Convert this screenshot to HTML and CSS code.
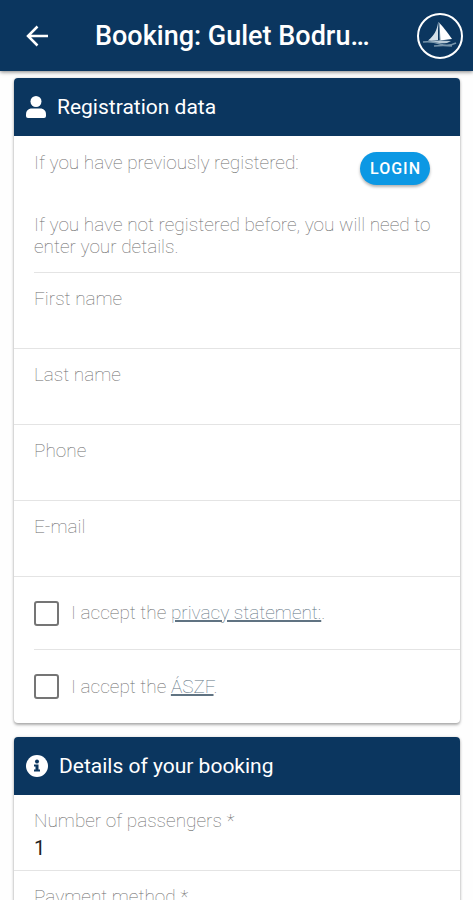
FILE: index.html
```html
<!DOCTYPE html>
<html lang="en">
<head>
<meta charset="utf-8">
<meta name="viewport" content="width=device-width, initial-scale=1">
<title>Booking: Gulet Bodrum</title>
<link rel="stylesheet" href="styles.css">
</head>
<body>
<div class="app">
  <header class="topbar">
    <button class="back" type="button" aria-label="Back">
      <svg viewBox="0 0 24 24" width="24" height="24" fill="none" stroke="#fff" stroke-width="2.500"><path d="M23 12H3.500M12.500 2.500L3 12l9.500 9.500"/></svg>
    </button>
    <h1 class="title">Booking: Gulet Bodru…</h1>
    <svg class="logo" viewBox="0 0 48 48" width="48" height="48" aria-hidden="true">
      <circle cx="24" cy="24" r="22" fill="none" stroke="#fff" stroke-width="2"/>
      <path d="M22 11C21 18 18 24 12 28.500Q17 29 22 28z" fill="#d3dfe8"/>
      <path d="M22.500 10C28 16 32 21 36 27L24 28.500z" fill="#fff"/>
      <path d="M23 11L24 29" stroke="#557995" stroke-width="1"/>
      <path d="M12 29Q24 28 35 29L31 31Q21 32 12 29z" fill="#b7c9d6"/>
      <path d="M7 30Q16 29 24 32T40 31M18 34Q27 33 36 34" fill="none" stroke="#7895ab" stroke-width="1.500"/>
    </svg>
  </header>
  <main class="content">
    <form class="cards">
      <section class="card">
        <h2 class="card-head">
          <svg viewBox="0 0 20 22" width="20" height="22" fill="#fff" aria-hidden="true"><circle cx="10" cy="5.500" r="5.500"/><path d="M6 12.500h8c4 0 6 2.500 6 6V20a2 2 0 0 1-2 2H2a2 2 0 0 1-2-2v-1.500c0-3.500 2-6 6-6z"/></svg>
          Registration data
        </h2>
        <div class="intro">
          <div class="login-row">
            <p>If you have previously registered:</p>
            <button class="login" type="button">LOGIN</button>
          </div>
          <p>If you have not registered before, you will need to enter your details.</p>
        </div>
        <div class="field"><label for="first">First name</label><input id="first" type="text"></div>
        <div class="field"><label for="last">Last name</label><input id="last" type="text"></div>
        <div class="field"><label for="phone">Phone</label><input id="phone" type="tel"></div>
        <div class="field"><label for="email">E-mail</label><input id="email" type="email"></div>
        <div class="check"><input id="privacy" type="checkbox"><label for="privacy">I accept the <a href="#privacy">privacy statement:</a>.</label></div>
        <div class="check"><input id="terms" type="checkbox"><label for="terms">I accept the <a href="#terms">ÁSZF</a>.</label></div>
      </section>
      <section class="card">
        <h2 class="card-head">
          <svg viewBox="0 0 22 22" width="22" height="22" aria-hidden="true"><circle cx="11" cy="11" r="11" fill="#fff"/><circle cx="11" cy="6.500" r="2" fill="#0b365f"/><path d="M8 9.500h4.500v5H14v2H8v-2h1.500v-3H8z" fill="#0b365f"/></svg>
          Details of your booking
        </h2>
        <div class="field"><label for="passengers">Number of passengers *</label><input id="passengers" type="text" inputmode="numeric" value="1"></div>
        <div class="field"><label for="payment">Payment method *</label><input id="payment" type="text"></div>
      </section>
    </form>
  </main>
</div>
</body>
</html>
```
FILE: styles.css
```css
* { box-sizing: border-box; }
body {
  margin: 0;
  background: #fefefe;
  color: #6c6c6c;
  font: 100 19px/22px Roboto, sans-serif;
}
h1, h2, p { margin: 0; }
button, input { font: inherit; }
.app { display: flex; flex-direction: column; height: 100vh; }
.topbar {
  display: flex;
  flex: none;
  align-items: center;
  height: 71px;
  padding: 0 9px 0 25px;
  background: #0b365f;
  box-shadow: 0 1px 4px rgba(0, 0, 0, 0.5);
  z-index: 1;
}
.back { display: flex; padding: 0; border: 0; background: none; }
.title {
  flex: 1;
  min-width: 0;
  margin: 0 46px;
  overflow: hidden;
  color: #fff;
  font-size: 27px;
  font-weight: 500;
  line-height: 36px;
  text-overflow: ellipsis;
  white-space: nowrap;
}
.logo { flex: none; }
.content { flex: 1; min-height: 0; overflow-y: auto; scrollbar-width: none; }
.cards { display: flex; flex-direction: column; gap: 14px; padding: 7px 13px 14px 14px; }
.card {
  overflow: hidden;
  border-radius: 4px;
  background: #fff;
  box-shadow: 0 2px 3px rgba(0, 0, 0, 0.3), 0 0 3px rgba(0, 0, 0, 0.14);
}
.card-head {
  display: flex;
  align-items: center;
  gap: 11px;
  height: 58px;
  padding: 0 12px;
  background: #0b365f;
  color: #fff;
  font-size: 21px;
  font-weight: 400;
}
.intro {
  display: flex;
  flex-direction: column;
  gap: 28px;
  margin-left: 20px;
  padding: 16px 20px 14px 0;
  border-bottom: 1px solid #e4e4e4;
}
.login-row {
  display: flex;
  justify-content: space-between;
  height: 34px;
  padding-right: 10px;
}
.login {
  height: 33px;
  padding: 0 9px 0 10px;
  border: 0;
  border-radius: 17px;
  background: #0c98e4;
  box-shadow: 0 2px 3px rgba(0, 0, 0, 0.3);
  color: #fff;
  font-size: 16px;
  font-weight: 500;
  letter-spacing: 1px;
}
.field {
  display: flex;
  flex-direction: column;
  gap: 2px;
  height: 76px;
  padding: 15px 20px 0;
  border-bottom: 1px solid #e4e4e4;
}
.field input {
  width: 100%;
  height: 28px;
  padding: 0;
  border: 0;
  outline: 0;
  background: none;
  color: #222;
  font-size: 20px;
  font-weight: 400;
}
.check {
  display: flex;
  align-items: center;
  gap: 12px;
  height: 73px;
  margin-left: 20px;
  border-bottom: 1px solid #e4e4e4;
}
.check input {
  appearance: none;
  width: 25px;
  height: 25px;
  margin: 0;
  border: 2px solid #757575;
  border-radius: 3px;
}
.check:last-child { border-bottom: 0; }
.check a { color: #607382; text-decoration-thickness: 2px; }
```
